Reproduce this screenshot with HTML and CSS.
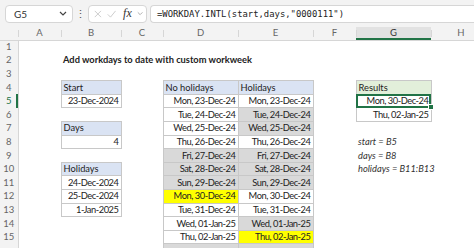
FILE: index.html
```html
<!DOCTYPE html>
<html lang="en">
<head>
    <meta charset="UTF-8">
    <title>WORKDAY.INTL custom workweek</title>
    <link rel="stylesheet" href="styles.css">
</head>
<body>
    <div class="formula-bar">
        <div class="name-box">
            <span>G5</span>
            <svg class="chev" width="8" height="5" viewBox="0 0 8 5"><path d="M1 1l3 3 3-3" fill="none" stroke="#444" stroke-width="1.2"/></svg>
        </div>
        <span class="dots">&#8942;</span>
        <div class="fx-box">
            <svg width="10" height="10" viewBox="0 0 10 10"><path d="M1 1l8 8M9 1l-8 8" stroke="#c4c4c4" stroke-width="1.1"/></svg>
            <svg width="12" height="10" viewBox="0 0 12 10"><path d="M1 5.5l3.5 3.5L11 1" fill="none" stroke="#c4c4c4" stroke-width="1.1"/></svg>
            <span class="fx">fx</span>
            <svg class="chev" width="8" height="5" viewBox="0 0 8 5"><path d="M1 1l3 3 3-3" fill="none" stroke="#999" stroke-width="1"/></svg>
        </div>
        <div class="formula">=WORKDAY.INTL(start,days,"0000111")</div>
    </div>

    <table class="sheet">
        <colgroup>
            <col class="c-row"><col class="c-a"><col class="c-b"><col class="c-c"><col class="c-d"><col class="c-e"><col class="c-f"><col class="c-g"><col class="c-h">
        </colgroup>
        <thead>
            <tr>
                <th class="corner"></th><th>A</th><th>B</th><th>C</th><th>D</th><th>E</th><th>F</th><th class="sel">G</th><th>H</th>
            </tr>
        </thead>
        <tbody>
            <tr><th>1</th><td></td><td></td><td></td><td></td><td></td><td></td><td></td><td></td></tr>
            <tr><th>2</th><td></td><td class="title">Add workdays to date with custom workweek</td><td></td><td></td><td></td><td></td><td></td><td></td></tr>
            <tr><th>3</th><td></td><td></td><td></td><td></td><td></td><td></td><td></td><td></td></tr>
            <tr><th>4</th><td></td><td class="box hdr">Start</td><td></td><td class="box hdr">No holidays</td><td class="box hdr">Holidays</td><td></td><td class="box hdr-green">Results</td><td></td></tr>
            <tr><th class="sel">5</th><td></td><td class="box num">23-Dec-2024</td><td></td><td class="box num">Mon, 23-Dec-24</td><td class="box num">Mon, 23-Dec-24</td><td></td><td class="box num active">Mon, 30-Dec-24</td><td></td></tr>
            <tr><th>6</th><td></td><td></td><td></td><td class="box num">Tue, 24-Dec-24</td><td class="box num off">Tue, 24-Dec-24</td><td></td><td class="box num">Thu, 02-Jan-25</td><td></td></tr>
            <tr><th>7</th><td></td><td class="box hdr">Days</td><td></td><td class="box num">Wed, 25-Dec-24</td><td class="box num off">Wed, 25-Dec-24</td><td></td><td></td><td></td></tr>
            <tr><th>8</th><td></td><td class="box num">4</td><td></td><td class="box num">Thu, 26-Dec-24</td><td class="box num">Thu, 26-Dec-24</td><td></td><td class="note">start = B5</td><td></td></tr>
            <tr><th>9</th><td></td><td></td><td></td><td class="box num off">Fri, 27-Dec-24</td><td class="box num off">Fri, 27-Dec-24</td><td></td><td class="note">days = B8</td><td></td></tr>
            <tr><th>10</th><td></td><td class="box hdr">Holidays</td><td></td><td class="box num off">Sat, 28-Dec-24</td><td class="box num off">Sat, 28-Dec-24</td><td></td><td class="note">holidays = B11:B13</td><td></td></tr>
            <tr><th>11</th><td></td><td class="box num">24-Dec-2024</td><td></td><td class="box num off">Sun, 29-Dec-24</td><td class="box num off">Sun, 29-Dec-24</td><td></td><td></td><td></td></tr>
            <tr><th>12</th><td></td><td class="box num">25-Dec-2024</td><td></td><td class="box num hit">Mon, 30-Dec-24</td><td class="box num">Mon, 30-Dec-24</td><td></td><td></td><td></td></tr>
            <tr><th>13</th><td></td><td class="box num">1-Jan-2025</td><td></td><td class="box num">Tue, 31-Dec-24</td><td class="box num">Tue, 31-Dec-24</td><td></td><td></td><td></td></tr>
            <tr><th>14</th><td></td><td></td><td></td><td class="box num">Wed, 01-Jan-25</td><td class="box num off">Wed, 01-Jan-25</td><td></td><td></td><td></td></tr>
            <tr><th>15</th><td></td><td></td><td></td><td class="box num">Thu, 02-Jan-25</td><td class="box num hit">Thu, 02-Jan-25</td><td></td><td></td><td></td></tr>
            <tr class="partial"><th></th><td></td><td></td><td></td><td class="box off"></td><td class="box off"></td><td></td><td></td><td></td></tr>
        </tbody>
    </table>
</body>
</html>
```

FILE: styles.css
```css
:root {
    --bar-bg: #f3f3f3;
    --line: #d6d6d6;
    --cell-line: #c8c8c8;
    --hdr-blue: #dae3f3;
    --hdr-green: #e2efda;
    --weekend: #d9d9d9;
    --yellow: #ffff00;
    --excel-green: #217346;
    --text: #222222;
}
html, body {
    margin: 0;
    overflow: hidden;
    background: #ffffff;
}
body {
    width: 474px;
    height: 248px;
}
.formula-bar {
    height: 27px;
    background: var(--bar-bg);
    display: flex;
    align-items: center;
    padding: 0 0 0 5px;
    box-sizing: border-box;
    font-family: "Lato", sans-serif;
}
.name-box {
    width: 68px;
    height: 18px;
    box-sizing: border-box;
    background: #ffffff;
    border: 1px solid var(--line);
    border-radius: 4px;
    display: flex;
    align-items: center;
    justify-content: space-between;
    padding: 0 5px 0 8px;
    font-size: 10px;
    color: #333;
}
.dots {
    width: 15px;
    text-align: center;
    color: #555;
    font-size: 11px;
}
.fx-box {
    width: 59px;
    height: 18px;
    box-sizing: border-box;
    background: #ffffff;
    border: 1px solid var(--line);
    border-radius: 4px;
    display: flex;
    align-items: center;
    gap: 5px;
    padding: 0 3px 0 5px;
}
.fx {
    font-family: "Liberation Serif", serif;
    font-style: italic;
    font-size: 12px;
    color: #333;
    margin-left: 2px;
}
.formula {
    flex: 1;
    height: 18px;
    box-sizing: border-box;
    margin-left: 3px;
    background: #ffffff;
    border: 1px solid var(--line);
    border-right: none;
    border-radius: 4px 0 0 4px;
    display: flex;
    align-items: center;
    padding-left: 6px;
    font-family: "DejaVu Sans Mono", monospace;
    font-size: 8.9px;
    color: #222;
}
.sheet {
    border-collapse: collapse;
    table-layout: fixed;
    width: 491px;
    font-family: "Lato", sans-serif;
    font-size: 9.3px;
    color: var(--text);
}
.c-row { width: 18px; }
.c-a { width: 43px; }
.c-b { width: 60px; }
.c-c { width: 42px; }
.c-d { width: 75px; }
.c-e { width: 75px; }
.c-f { width: 43px; }
.c-g { width: 75px; }
.c-h { width: 60px; }
.sheet th,
.sheet td {
    padding: 0 2px;
    height: 13.6px;
    line-height: 12px;
    white-space: nowrap;
    box-sizing: border-box;
}
.sheet thead th {
    height: 13px;
    background: var(--bar-bg);
    color: #666;
    font-weight: normal;
    font-size: 9.5px;
    border-bottom: 1px solid var(--line);
    position: relative;
}
.sheet thead th + th::before {
    content: "";
    position: absolute;
    left: 0;
    top: 3px;
    bottom: 3px;
    border-left: 1px solid var(--line);
}
.sheet thead th.sel {
    background: #e2e2e2;
    color: #333;
    box-shadow: inset 0 -2px 0 var(--excel-green);
}
.sheet tbody th {
    background: var(--bar-bg);
    color: #666;
    font-weight: normal;
    font-size: 9.5px;
    text-align: center;
    border-right: 1px solid var(--line);
}
.sheet tbody th.sel {
    color: var(--excel-green);
    box-shadow: inset -2px 0 0 var(--excel-green);
}
.title {
    font-weight: bold;
    overflow: visible;
    padding-left: 2px;
}
.box {
    border: 1px solid var(--cell-line);
}
.hdr {
    background: var(--hdr-blue);
    text-align: left;
}
.hdr-green {
    background: var(--hdr-green);
    text-align: left;
}
.num {
    text-align: right;
    letter-spacing: -0.45px;
    padding-right: 2px;
}
.off {
    background: var(--weekend);
}
.hit {
    background: var(--yellow);
}
.active {
    position: relative;
    outline: 2px solid var(--excel-green);
    outline-offset: -2px;
}
.active::after {
    content: "";
    position: absolute;
    right: -3px;
    bottom: -3px;
    width: 4px;
    height: 4px;
    background: var(--excel-green);
    border: 1px solid #ffffff;
}
.note {
    font-style: italic;
    color: #333;
    overflow: visible;
}
```
